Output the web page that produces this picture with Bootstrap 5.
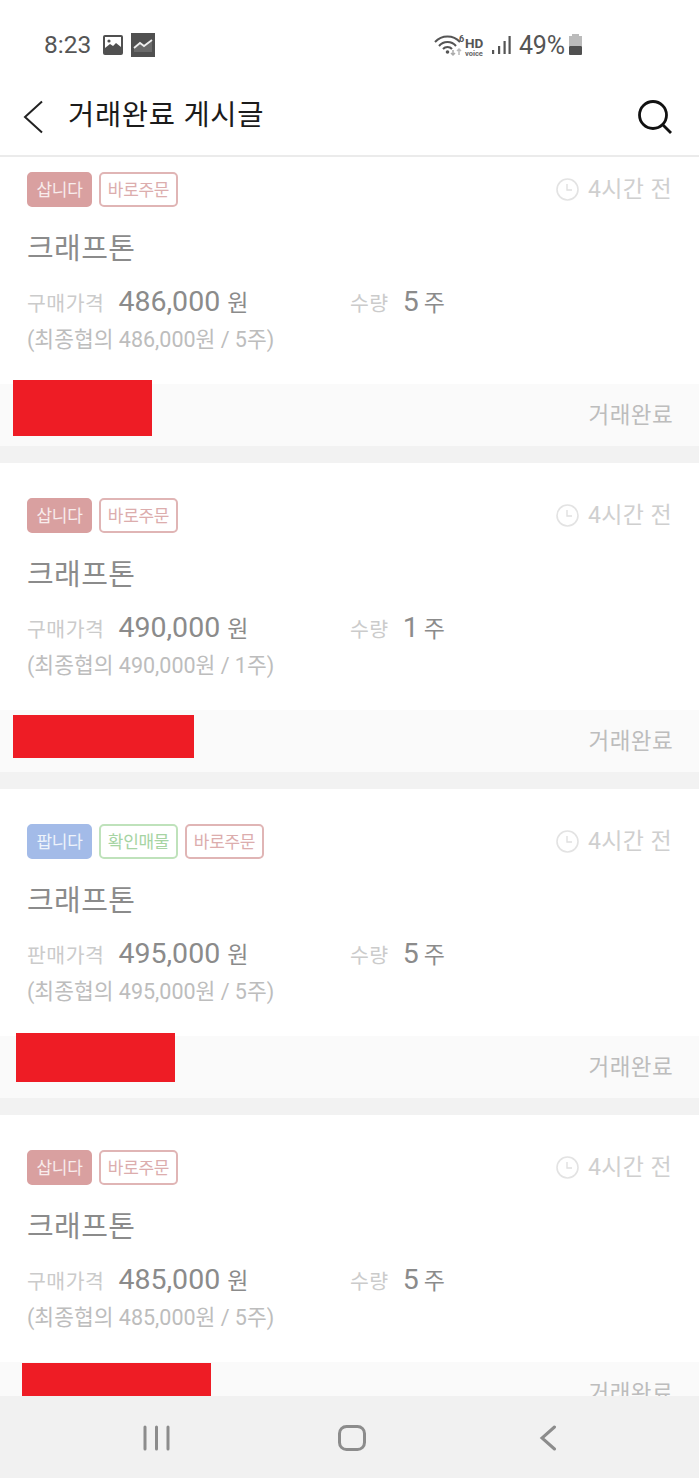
<!doctype html>
<html lang="ko">
<head>
<meta charset="utf-8">
<title>거래완료 게시글</title>
<link rel="stylesheet" href="https://cdn.jsdelivr.net/npm/bootstrap@5.3.0/dist/css/bootstrap.min.css">
<style>
html,body{height:1478px;overflow:hidden;background:#fff}
body{font-family:Roboto,"Noto Sans CJK KR","Liberation Sans",sans-serif}
.phone{height:1478px;width:699px}
.status{height:78px;padding:12px 0 0 44px;color:#555;flex:none}
.clock{font-size:24.5px;line-height:1;width:51px}
.ic-left{margin-left:8px}
.stat-right{margin-left:279px}
.pct{font-size:25px;line-height:1;margin:0 3px 0 4px;letter-spacing:-.2px;white-space:nowrap}
.appbar{height:79px;padding:0 0 0 23px;border-bottom:2px solid #ebebeb;flex:none}
.appbar h1{font-size:28.5px;font-weight:400;color:#1b1b1b;margin:0 0 0 25px;letter-spacing:.7px;line-height:1.2}
.search{margin-left:auto;margin-right:26px}
.feed{flex:1 1 0;overflow:hidden;min-height:0}
.feed-inner{margin-top:-20px;background:#f2f2f2}
.post{background:#fff;height:309px;position:relative;margin-bottom:17px}
.post-body{height:247px;padding:35px 27px 0}
.tagrow{height:35px}
.chip{height:35px;border-radius:5px;font-size:17px;line-height:32px;padding:0 5px;border:2px solid;text-align:center;width:65px;flex:none;letter-spacing:-.3px}
.chip-buy{background:#d9a0a0;border-color:#d9a0a0;color:#f8ecec}
.chip-sell{background:#a3bbe8;border-color:#a3bbe8;color:#eef3fb}
.chip-ok{background:#fff;border-color:#bfe2bb;color:#a6d4a3;width:79px;margin-left:-1px}
.chip-now{background:#fff;border-color:#e0b5b5;color:#dcadad;width:79px;margin-left:-1px}
.ago{margin-left:auto;color:#cfcfcf;font-size:23px;line-height:1;gap:9px;letter-spacing:.4px}
.ttl{font-size:29px;line-height:1;color:#8b8b8b;margin-top:28px;letter-spacing:.4px;height:29px}
.priceline{margin-top:23px;height:30px;color:#8b8b8b}
.lab{font-size:20.500px;color:#cbcbcb;letter-spacing:.5px;line-height:30px;padding-top:2px}
.val{font-size:28.500px;line-height:30px}
.unit{font-size:23px;line-height:30px;margin-left:7px}
.price-col{width:323px;gap:14px;flex:none}
.qty-col{gap:14px}
.qty-col .unit{margin-left:5px}
.final{font-size:21.500px;color:#bdbdbd;line-height:1;margin-top:12px;letter-spacing:0}
.postfoot{height:62px;background:#fafafa;padding:0 26px 0 0;color:#bdbdbd;font-size:22.500px;line-height:62px;text-align:right;letter-spacing:.4px}
.redact{position:absolute;background:#ee1c25}
.softnav{height:82px;background:#f1f1f1;flex:none;position:relative;z-index:2}
.softnav svg{position:absolute}
</style>
</head>
<body>
<div class="phone d-flex flex-column">
  <div class="status d-flex align-items-center">
    <span class="clock">8:23</span>
    <svg class="ic-left" width="20" height="20" viewBox="0 0 20 20"><rect width="20" height="20" rx="2" fill="#505050"/><rect x="2" y="2" width="16" height="13" fill="#fff"/><path d="M2 15v-2l5-4 3 2 3-3 5 4v3z" fill="#505050"/><circle cx="6" cy="6" r="1.600" fill="#505050"/></svg>
    <svg class="ms-2" width="24" height="24" viewBox="0 0 24 24"><rect width="24" height="24" fill="#505050"/><path d="M3 19v-4l6-5 4 3 8-6v12z" fill="#6a6a6a"/><path d="M3 15l6-5 4 3 8-6" fill="none" stroke="#eee" stroke-width="1.800"/></svg>
    <svg class="stat-right" width="53" height="24" viewBox="0 0 53 24"><g fill="none" stroke="#555" stroke-width="2"><path d="M1 9a17 17 0 0 1 25 0"/><path d="M5 13a11 11 0 0 1 17 0"/><path d="M9 16a6 6 0 0 1 9 0"/></g><circle cx="13.500" cy="19" r="1.800" fill="#555"/><path d="M19 17v5m-2-2l2 2 2-2" fill="none" stroke="#aaa" stroke-width="1.500"/><path d="M25 22v-6m-2 2l2-2 2 2" fill="none" stroke="#bbb" stroke-width="1.500"/><text x="25" y="9" font-size="9" font-weight="700" fill="#555" font-family="Roboto,sans-serif">6</text><text x="31" y="15" font-size="13.500" font-weight="700" fill="#555" font-family="Roboto,sans-serif">HD</text><text x="31" y="23" font-size="7.500" font-weight="700" fill="#666" font-family="Roboto,sans-serif">voice</text></svg>
    <svg class="ms-1" width="20" height="20" viewBox="0 0 20 20"><g fill="#555"><rect x="1" y="15" width="2.200" height="4"/><rect x="7" y="11" width="2.200" height="8"/><rect x="12.500" y="6" width="2.200" height="13"/><rect x="17.500" y="1" width="2.200" height="18"/></g></svg>
    <span class="pct ms-2">49%</span>
    <svg width="15" height="22" viewBox="0 0 15 22"><rect x="4" y="0" width="7" height="3" fill="#bbb"/><rect x="1" y="2" width="13" height="10" fill="#bbb"/><rect x="1" y="12" width="13" height="9" rx="1" fill="#505050"/></svg>
  </div>
  <header class="appbar d-flex align-items-center">
    <svg width="20" height="34" viewBox="0 0 20 34"><path d="M19 1.500 2 17l17 15.500" fill="none" stroke="#222" stroke-width="2"/></svg>
    <h1>거래완료 게시글</h1>
    <svg class="search" width="36" height="36" viewBox="0 0 36 36"><circle cx="16" cy="16" r="13.500" fill="none" stroke="#111" stroke-width="2.800"/><path d="M25.500 25.500 34 34" stroke="#111" stroke-width="2.800" fill="none"/></svg>
  </header>
  <main class="feed">
    <div class="feed-inner">

      <article class="post">
        <div class="post-body">
          <div class="tagrow d-flex gap-2"><span class="chip chip-buy">삽니다</span><span class="chip chip-now">바로주문</span>
            <span class="ago d-flex align-items-center"><svg width="23" height="23" viewBox="0 0 23 23"><circle cx="11.500" cy="11.500" r="10.500" fill="none" stroke="#e3e3e3" stroke-width="1.600"/><path d="M11 6v6h5" fill="none" stroke="#e0e0e0" stroke-width="1.400"/></svg>4시간 전</span></div>
          <div class="ttl">크래프톤</div>
          <div class="priceline d-flex"><div class="price-col d-flex"><span class="lab">구매가격</span><span><span class="val">486,000</span><span class="unit">원</span></span></div><div class="qty-col d-flex"><span class="lab">수량</span><span><span class="val">5</span><span class="unit">주</span></span></div></div>
          <div class="final">(최종협의 486,000원 / 5주)</div>
        </div>
        <div class="postfoot">거래완료</div>
        <div class="redact" style="left:13px;top:243px;width:139px;height:56px"></div>
      </article>

      <article class="post">
        <div class="post-body">
          <div class="tagrow d-flex gap-2"><span class="chip chip-buy">삽니다</span><span class="chip chip-now">바로주문</span>
            <span class="ago d-flex align-items-center"><svg width="23" height="23" viewBox="0 0 23 23"><circle cx="11.500" cy="11.500" r="10.500" fill="none" stroke="#e3e3e3" stroke-width="1.600"/><path d="M11 6v6h5" fill="none" stroke="#e0e0e0" stroke-width="1.400"/></svg>4시간 전</span></div>
          <div class="ttl">크래프톤</div>
          <div class="priceline d-flex"><div class="price-col d-flex"><span class="lab">구매가격</span><span><span class="val">490,000</span><span class="unit">원</span></span></div><div class="qty-col d-flex"><span class="lab">수량</span><span><span class="val">1</span><span class="unit">주</span></span></div></div>
          <div class="final">(최종협의 490,000원 / 1주)</div>
        </div>
        <div class="postfoot">거래완료</div>
        <div class="redact" style="left:13px;top:252px;width:181px;height:43px"></div>
      </article>

      <article class="post">
        <div class="post-body">
          <div class="tagrow d-flex gap-2"><span class="chip chip-sell">팝니다</span><span class="chip chip-ok">확인매물</span><span class="chip chip-now">바로주문</span>
            <span class="ago d-flex align-items-center"><svg width="23" height="23" viewBox="0 0 23 23"><circle cx="11.500" cy="11.500" r="10.500" fill="none" stroke="#e3e3e3" stroke-width="1.600"/><path d="M11 6v6h5" fill="none" stroke="#e0e0e0" stroke-width="1.400"/></svg>4시간 전</span></div>
          <div class="ttl">크래프톤</div>
          <div class="priceline d-flex"><div class="price-col d-flex"><span class="lab">판매가격</span><span><span class="val">495,000</span><span class="unit">원</span></span></div><div class="qty-col d-flex"><span class="lab">수량</span><span><span class="val">5</span><span class="unit">주</span></span></div></div>
          <div class="final">(최종협의 495,000원 / 5주)</div>
        </div>
        <div class="postfoot">거래완료</div>
        <div class="redact" style="left:16px;top:244px;width:159px;height:49px"></div>
      </article>

      <article class="post">
        <div class="post-body">
          <div class="tagrow d-flex gap-2"><span class="chip chip-buy">삽니다</span><span class="chip chip-now">바로주문</span>
            <span class="ago d-flex align-items-center"><svg width="23" height="23" viewBox="0 0 23 23"><circle cx="11.500" cy="11.500" r="10.500" fill="none" stroke="#e3e3e3" stroke-width="1.600"/><path d="M11 6v6h5" fill="none" stroke="#e0e0e0" stroke-width="1.400"/></svg>4시간 전</span></div>
          <div class="ttl">크래프톤</div>
          <div class="priceline d-flex"><div class="price-col d-flex"><span class="lab">구매가격</span><span><span class="val">485,000</span><span class="unit">원</span></span></div><div class="qty-col d-flex"><span class="lab">수량</span><span><span class="val">5</span><span class="unit">주</span></span></div></div>
          <div class="final">(최종협의 485,000원 / 5주)</div>
        </div>
        <div class="postfoot">거래완료</div>
        <div class="redact" style="left:22px;top:248px;width:189px;height:50px"></div>
      </article>

    </div>
  </main>
  <nav class="softnav">
    <svg style="left:143px;top:29px" width="27" height="26" viewBox="0 0 27 26"><g stroke="#8c8c8c" stroke-width="3" stroke-linecap="round"><path d="M2 2v22M13.500 2v22M25 2v22"/></g></svg>
    <svg style="left:338px;top:29px" width="28" height="26" viewBox="0 0 28 26"><rect x="1.500" y="1.500" width="25" height="23" rx="7" fill="none" stroke="#8c8c8c" stroke-width="3"/></svg>
    <svg style="left:539px;top:29px" width="18" height="26" viewBox="0 0 18 26"><path d="M15.500 2 3 13l12.500 11" fill="none" stroke="#8c8c8c" stroke-width="3" stroke-linecap="round"/></svg>
  </nav>
</div>
<script src="https://cdn.jsdelivr.net/npm/bootstrap@5.3.0/dist/js/bootstrap.bundle.min.js"></script>
</body>
</html>
